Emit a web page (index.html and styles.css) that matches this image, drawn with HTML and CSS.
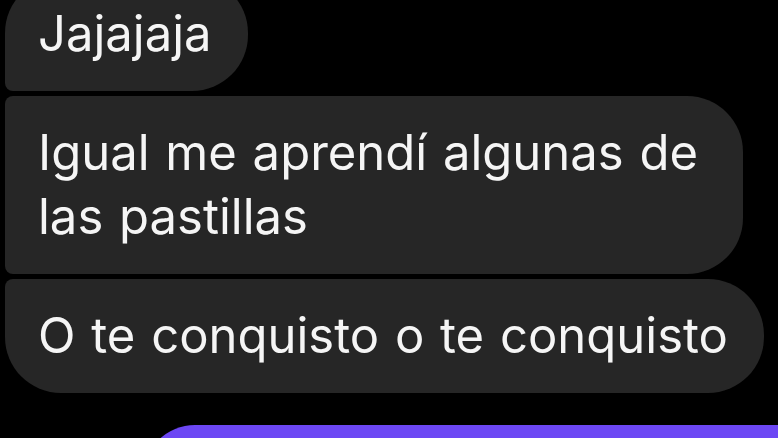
FILE: index.html
```html
<!DOCTYPE html>
<html>
<head>
  <title>Chat</title>
  <link rel="stylesheet" href="styles.css">
</head>
<body>
  <div class="chat">
    <div class="group theirs">
      <div class="bubble first">Jajajaja</div>
      <div class="bubble middle wide">Igual me aprendí algunas de las pastillas</div>
      <div class="bubble last">O te conquisto o te conquisto</div>
    </div>
    <div class="group mine">
      <div class="bubble own"></div>
    </div>
  </div>
</body>
</html>
```

FILE: styles.css
```css
body {
  margin: 0;
  background: #000;
  font-family: Inter, Roboto, sans-serif;
  overflow: hidden;
}
.chat {
  margin-top: -23px;
  padding: 0 5px;
  display: flex;
  flex-direction: column;
  gap: 32px;
}
.group {
  display: flex;
  flex-direction: column;
  gap: 5px;
}
.theirs {
  align-items: flex-start;
}
.mine {
  align-items: flex-end;
  margin-right: -60px;
}
.bubble {
  box-sizing: border-box;
  background: #262626;
  color: #f5f5f5;
  font-size: 49px;
  line-height: 64px;
  word-spacing: 2px;
  padding: 25px 36px 25px 33px;
  border-radius: 56px;
  max-width: 800px;
}
.bubble.first {
  border-bottom-left-radius: 8px;
}
.bubble.middle {
  border-top-left-radius: 8px;
  border-bottom-left-radius: 8px;
}
.bubble.wide {
  width: 738px;
}
.bubble.last {
  border-top-left-radius: 8px;
}
.bubble.own {
  background: #6c47f4;
  width: 690px;
  height: 114px;
  border-radius: 52px;
}
```
